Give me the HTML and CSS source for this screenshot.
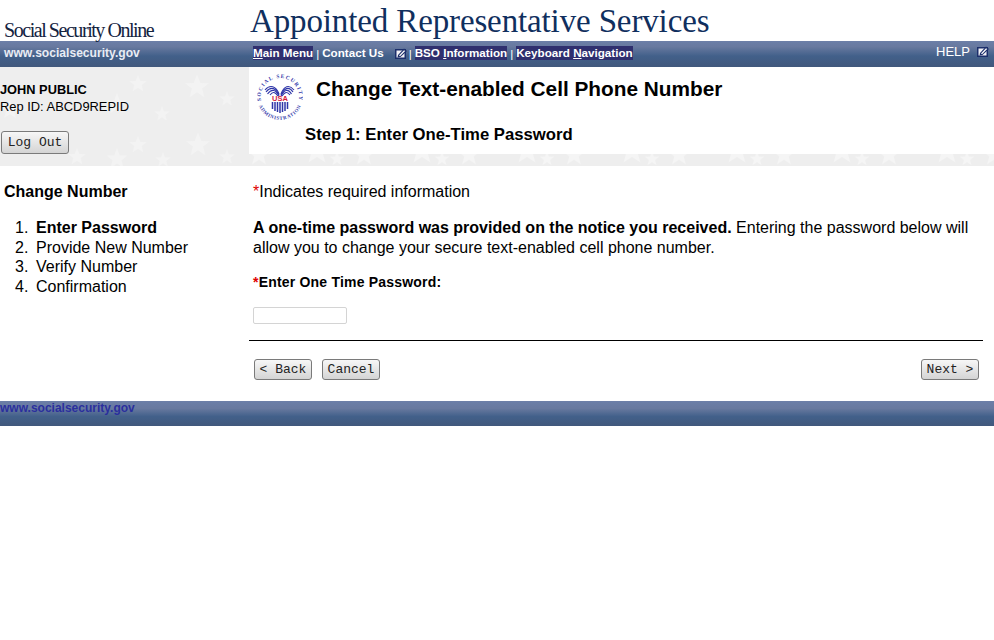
FILE: index.html
```html
<!DOCTYPE html>
<html lang="en">
<head>
<meta charset="utf-8">
<title>Change Text-enabled Cell Phone Number</title>
<link rel="stylesheet" href="styles.css">
</head>
<body>
<svg class="icon-defs" width="0" height="0" aria-hidden="true">
  <defs>
    <symbol id="ext" viewBox="0 0 12 11" preserveAspectRatio="none">
      <rect x="0" y="1" width="11" height="10" fill="#1c2f6b"/>
      <rect x="1.5" y="2.5" width="8" height="7" fill="#f2f2f6"/>
      <path d="M2.5 9.4 L3 7 L9 0.5 L12 3 L5.5 9 Z" fill="#1c2f6b"/>
      <path d="M4 7.6 L9 2.2 L10.2 3.1 L5 8.3 Z" fill="#fff"/>
    </symbol>
    <polygon id="star" points="0,-10 2.6,-3.2 9.5,-3.1 4.1,1.2 5.9,8.1 0,4.2 -5.9,8.1 -4.1,1.2 -9.5,-3.1 -2.6,-3.2"/>
  </defs>
</svg>

<header class="masthead">
  <div class="brand">Social Security Online</div>
  <h1 class="app-title">Appointed Representative Services</h1>
</header>

<nav class="navbar">
  <div class="site-link">www.socialsecurity.gov</div>
  <div class="nav-links">
    <a class="nav-item"><u>M</u>ain Menu</a>
    <span class="sep">|</span>
    <a class="nav-plain">Contact Us</a>
    <svg class="ext-icon ext-contact"><use href="#ext"/></svg>
    <span class="sep">|</span>
    <a class="nav-item">BSO <u>I</u>nformation</a>
    <span class="sep">|</span>
    <a class="nav-item">Keyboard <u>N</u>avigation</a>
  </div>
  <div class="help">HELP <svg class="ext-icon ext-help"><use href="#ext"/></svg></div>
</nav>

<section class="banner">
  <svg class="stars" viewBox="0 0 994 99" preserveAspectRatio="none" aria-hidden="true">
    <defs>
      <pattern id="strip-stars" patternUnits="userSpaceOnUse" x="240" y="0" width="105" height="99">
        <use href="#star" transform="translate(19,88) scale(1.15)"/>
        <use href="#star" transform="translate(77,84) scale(1.4)"/>
        <use href="#star" transform="translate(97,92) scale(.75)"/>
      </pattern>
    </defs>
    <g class="star-fill">
      <use href="#star" transform="translate(10,43)"/>
      <use href="#star" transform="translate(117,37) scale(1.1)"/>
      <use href="#star" transform="translate(138,17) scale(.9)"/>
      <use href="#star" transform="translate(162,47) scale(.8)"/>
      <use href="#star" transform="translate(197,20) scale(1.25)"/>
      <use href="#star" transform="translate(227,32) scale(.8)"/>
      <use href="#star" transform="translate(77,90) scale(.9)"/>
      <use href="#star" transform="translate(117,92) scale(1.1)"/>
      <use href="#star" transform="translate(138,78) scale(.9)"/>
      <use href="#star" transform="translate(163,93) scale(.8)"/>
      <use href="#star" transform="translate(198,78) scale(1.25)"/>
      <use href="#star" transform="translate(227,90) scale(.8)"/>
      <rect x="249" y="87" width="745" height="12" fill="url(#strip-stars)"/>
    </g>
  </svg>
  <div class="user-panel">
    <div class="user-name">JOHN PUBLIC</div>
    <div class="rep-id">Rep ID: ABCD9REPID</div>
    <button class="btn logout" type="button">Log Out</button>
  </div>
  <div class="page-head">
    <svg class="seal" viewBox="0 0 46 48" role="img" aria-label="Social Security Administration seal">
      <defs>
        <path id="arc-top" d="M4.9 30.5 A19.2 19.2 0 1 1 41.1 30.5"/>
        <path id="arc-bot" d="M1.5 32 A23 23 0 0 0 44.5 32"/>
      </defs>
      <text class="seal-text seal-top"><textPath href="#arc-top" startOffset="50%" text-anchor="middle">SOCIAL SECURITY</textPath></text>
      <text class="seal-text seal-bot"><textPath href="#arc-bot" startOffset="50%" text-anchor="middle">ADMINISTRATION</textPath></text>
      <g class="seal-wings">
        <path d="M22 21 C19 13 13 11 8 17"/>
        <path d="M22 22 C19 15 14 13 9 19"/>
        <path d="M22 23 C19 17 15 15 10.5 21"/>
        <path d="M21 23 C18 19 16 18 13 22"/>
        <path d="M24 21 C27 13 32 11 37 17"/>
        <path d="M24 22 C27 15 32 13 36 19"/>
        <path d="M24 23 C27 17 31 15 34.5 21"/>
        <path d="M25 23 C28 19 30 18 33 22"/>
      </g>
      <text class="seal-usa" x="23" y="28.2" text-anchor="middle">USA</text>
      <path class="seal-bars" d="M15.5 29 V36 M18 29 V38 M20.5 29 V39 M23 29 V40 M25.5 29 V39 M28 29 V38 M30.5 29 V36"/>
    </svg>
    <div class="head-text">
      <h2 class="page-title">Change Text-enabled Cell Phone Number</h2>
      <h3 class="step-title">Step 1: Enter One-Time Password</h3>
    </div>
  </div>
</section>

<main class="layout">
  <aside class="sidebar">
    <h2 class="side-title">Change Number</h2>
    <ol class="steps">
      <li class="current">Enter Password</li>
      <li>Provide New Number</li>
      <li>Verify Number</li>
      <li>Confirmation</li>
    </ol>
  </aside>
  <div class="content">
    <p class="required-note"><span class="req">*</span>Indicates required information</p>
    <p class="intro"><strong>A one-time password was provided on the notice you received.</strong> Entering the password below will allow you to change your secure text-enabled cell phone number.</p>
    <label class="field-label" for="otp"><span class="req">*</span>Enter One Time Password:</label>
    <input class="field-input" id="otp" type="text">
    <div class="actions">
      <button class="btn" type="button">&lt; Back</button>
      <button class="btn" type="button">Cancel</button>
      <button class="btn next" type="button">Next &gt;</button>
    </div>
  </div>
</main>

<footer class="footer">www.socialsecurity.gov</footer>
</body>
</html>
```
FILE: styles.css
```css
* { box-sizing: border-box; }
html, body { margin: 0; padding: 0; }
body {
  background: #fff;
  color: #000;
  font-family: "Liberation Sans", Arial, sans-serif;
  font-size: 16px;
}
.icon-defs { position: absolute; }

.masthead { display: flex; height: 41px; align-items: flex-end; }
.brand {
  width: 249px;
  padding: 0 0 0 4px;
  font-family: "Liberation Serif", serif;
  font-size: 20px;
  letter-spacing: -1.45px;
  line-height: 22px;
  color: #14233f;
}
.app-title {
  margin: 0;
  padding: 0 0 0 1px;
  font-family: "Liberation Serif", serif;
  font-weight: 400;
  font-size: 33px;
  letter-spacing: -0.13px;
  line-height: 40px;
  color: #102f5e;
}

.navbar {
  display: flex;
  height: 26px;
  padding-bottom: 2px;
  align-items: center;
  color: #fff;
  font-size: 11.65px;
  font-weight: 700;
  background: linear-gradient(#6c7fa8 0, #68799f 22%, #42608a 58%, #41587c 100%);
}
.site-link { width: 253px; padding-left: 4px; font-size: 12.1px; color: #e8ecf4; }
.nav-links { display: flex; align-items: center; flex: 1; }
.nav-item { background: #2f2f6e; line-height: 14px; }
.nav-plain { line-height: 14px; }
.sep { margin: 0 3px; font-weight: 400; }
.ext-icon { width: 12px; height: 11px; display: inline-block; }
.ext-contact { margin: 0 -1px 0 11px; }
.help {
  display: flex;
  align-items: center;
  gap: 7px;
  padding: 0 5px 3px 0;
  font-weight: 400;
  font-size: 13px;
}

.banner {
  position: relative;
  display: flex;
  height: 99px;
  background: #eeeeee;
}
.stars { position: absolute; inset: 0; width: 100%; height: 100%; }
.star-fill { fill: #f3f3f3; }
#strip-stars { fill: #f5f5f5; }
.user-panel {
  position: relative;
  width: 249px;
  padding-top: 15px;
  font-size: 13px;
  line-height: 16px;
}
.user-name { font-weight: 700; font-size: 12.8px; }
.rep-id { margin: 1px 0 16px; font-size: 12.9px; }
.page-head {
  position: relative;
  flex: 1;
  display: flex;
  height: 87px;
  background: #fff;
}
.seal { width: 46px; height: 48px; margin: 6px 0 0 8px; flex: none; }
.seal-text { font-family: "Liberation Serif", serif; font-weight: 700; fill: #2f36a8; }
.seal-top { font-size: 5.4px; letter-spacing: 1.2px; }
.seal-bot { font-size: 5px; letter-spacing: .6px; }
.seal-wings { fill: none; stroke: #2f36a8; stroke-width: 1.15; }
.seal-usa { font-family: "Liberation Sans", sans-serif; font-weight: 700; font-size: 7.5px; fill: #d31c3e; }
.seal-bars { stroke: #2f36a8; stroke-width: 1.5; fill: none; }
.head-text { padding-top: 10px; }
.page-title { margin: 0 0 0 13px; font-size: 20.8px; line-height: 24px; font-weight: 700; }
.step-title { margin: 24px 0 0 2px; font-size: 16.7px; line-height: 20px; font-weight: 700; }

.btn {
  display: inline-block;
  width: 58px;
  height: 21px;
  padding: 0;
  border: 1px solid #7a7a7a;
  border-radius: 3px;
  background: linear-gradient(#f7f7f7, #d4d4d4);
  color: #222;
  font-family: "Liberation Mono", "Courier New", monospace;
  font-size: 13px;
  line-height: 19px;
  cursor: pointer;
}
.logout { margin-left: 1px; height: 23px; width: 68px; }

.layout { display: flex; height: 235px; }
.sidebar { width: 249px; padding: 16px 0 0 4px; flex: none; }
.side-title { margin: 0 0 16px; font-size: 16px; line-height: 20px; font-weight: 700; }
.steps { margin: 0; padding: 0 0 0 11px; line-height: 19.5px; list-style: none; counter-reset: step; }
.steps li { display: flex; counter-increment: step; }
.steps li::before { content: counter(step) "."; width: 21px; flex: none; font-weight: 400; }
.current { font-weight: 700; }
.content { flex: 1; display: flex; flex-direction: column; padding: 16px 11px 0 0; }
.required-note, .intro { margin: 0 0 0 4px; line-height: 20px; }
.required-note { margin-bottom: 15.5px; }
.intro { margin-bottom: 14.5px; line-height: 20.5px; width: 725px; }
.req { color: #e00000; }
.field-label { margin-left: 4px; font-size: 14px; font-weight: 700; line-height: 18px; letter-spacing: .2px; }
.field-input {
  width: 94px;
  height: 17px;
  margin: 16px 0 0 4px;
  border: 1px solid #d4d4d4;
  border-radius: 2px;
  background: #fff;
}
.actions {
  display: flex;
  gap: 10px;
  margin-top: 16px;
  padding: 18px 4px 0 5px;
  border-top: 1px solid #000;
}
.next { margin-left: auto; }

.footer {
  height: 25px;
  color: #2a2f9e;
  font-size: 12px;
  font-weight: 700;
  line-height: 14px;
  background: linear-gradient(#6c7fa8 0, #68799f 30%, #42608a 62%, #41587c 100%);
}
```
